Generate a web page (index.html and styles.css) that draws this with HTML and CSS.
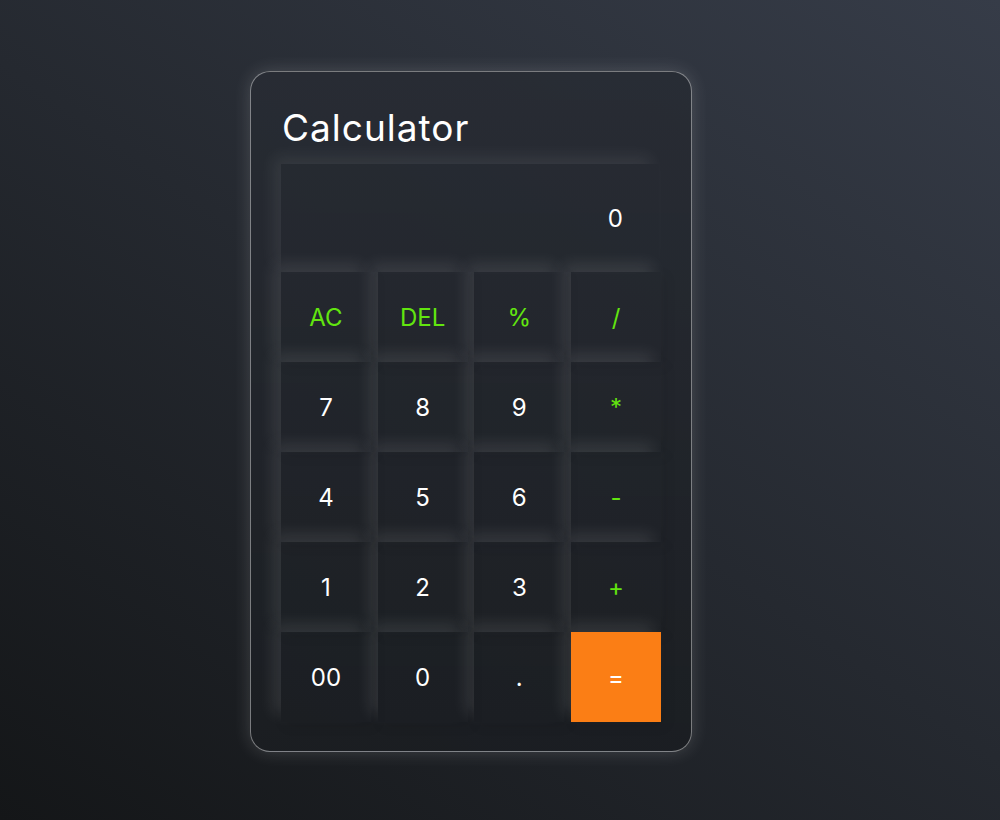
FILE: index.html
```html
<!DOCTYPE html>
<html lang="en">
<head>
<meta charset="utf-8">
<title>Calculator</title>
<link rel="stylesheet" href="styles.css">
</head>
<body>
  <main class="calculator">
    <h1 class="title">Calculator</h1>
    <div class="display">0</div>
    <div class="keys">
      <button class="key op">AC</button>
      <button class="key op">DEL</button>
      <button class="key op">%</button>
      <button class="key op">/</button>
      <button class="key">7</button>
      <button class="key">8</button>
      <button class="key">9</button>
      <button class="key op">*</button>
      <button class="key">4</button>
      <button class="key">5</button>
      <button class="key">6</button>
      <button class="key op">-</button>
      <button class="key">1</button>
      <button class="key">2</button>
      <button class="key">3</button>
      <button class="key op">+</button>
      <button class="key">00</button>
      <button class="key">0</button>
      <button class="key">.</button>
      <button class="key equals">=</button>
    </div>
  </main>
</body>
</html>
```

FILE: styles.css
```css
html, body {
  margin: 0;
  height: 100%;
}

body {
  background: linear-gradient(35deg, #141618 0%, #363c48 100%);
  font-family: Inter, "Noto Sans", "Liberation Sans", sans-serif;
  display: flex;
  align-items: flex-start;
  justify-content: flex-start;
  padding: 71px 0 0 250px;
  box-sizing: border-box;
}

.calculator {
  width: 442px;
  height: 681px;
  box-sizing: border-box;
  padding: 31px 30px 28px 30px;
  border: 1px solid rgba(255, 255, 255, 0.42);
  border-radius: 20px;
  background: linear-gradient(180deg, rgba(40, 44, 52, 0.9), rgba(27, 30, 34, 0.95));
  box-shadow: 0 0 18px rgba(255, 255, 255, 0.16);
  display: flex;
  flex-direction: column;
}

.title {
  margin: 0 0 12px 1px;
  padding-top: 1px;
  font-size: 37px;
  line-height: 48px;
  font-weight: 400;
  letter-spacing: 1px;
  color: #ffffff;
}

.display {
  width: 378px;
  height: 108px;
  box-sizing: border-box;
  display: flex;
  align-items: center;
  justify-content: flex-end;
  padding-right: 36px;
  font-size: 24px;
  color: #ffffff;
  background: transparent;
  box-shadow: -8px -8px 15px rgba(255, 255, 255, 0.07);
}

.keys {
  display: grid;
  grid-template-columns: repeat(4, 90px);
  grid-auto-rows: 90px;
  justify-content: space-between;
  width: 380px;
}

.key {
  border: none;
  margin: 0;
  padding: 0;
  width: 90px;
  height: 90px;
  font-family: inherit;
  font-size: 24px;
  font-weight: 400;
  color: #ffffff;
  background: transparent;
  box-shadow: -8px -8px 15px rgba(255, 255, 255, 0.1), 4px 4px 12px rgba(0, 0, 0, 0.08);
  cursor: pointer;
}

.key.op {
  color: #62e50f;
}

.key.equals {
  background: #fb7e15;
  color: #ffffff;
}
```
